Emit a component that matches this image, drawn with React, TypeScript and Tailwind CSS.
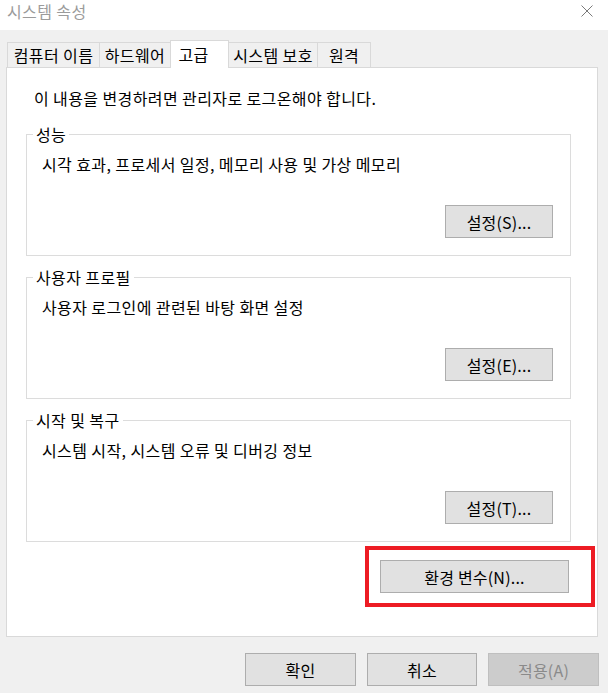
import React from "react";

type Tab = { label: string; width: string; active?: boolean };

const tabs: Tab[] = [
  { label: "컴퓨터 이름", width: "w-[93px]" },
  { label: "하드웨어", width: "w-[72px]" },
  { label: "고급", width: "w-[59px]", active: true },
  { label: "시스템 보호", width: "w-[90px]" },
  { label: "원격", width: "w-[54px]" },
];

const groups = [
  { title: "성능", desc: "시각 효과, 프로세서 일정, 메모리 사용 및 가상 메모리", button: "설정(S)..." },
  { title: "사용자 프로필", desc: "사용자 로그인에 관련된 바탕 화면 설정", button: "설정(E)..." },
  { title: "시작 및 복구", desc: "시스템 시작, 시스템 오류 및 디버깅 정보", button: "설정(T)..." },
];

function WinButton({
  children,
  className = "",
  disabled = false,
}: {
  children: React.ReactNode;
  className?: string;
  disabled?: boolean;
}) {
  return (
    <button
      type="button"
      disabled={disabled}
      className={
        "flex h-[33px] items-center justify-center border text-[16px] leading-[20px] tracking-[0.2px] " +
        (disabled
          ? "border-[#bfbfbf] bg-[#cccccc] text-[#8a8a8a]"
          : "border-[#adadad] bg-[#e1e1e1] text-black") +
        " " +
        className
      }
    >
      {children}
    </button>
  );
}

function GroupBox({ title, desc, button }: { title: string; desc: string; button: string }) {
  return (
    <div className="ml-[19px] mr-[26px] flex h-[122px] flex-col border border-[#dcdcdc]">
      <span className="-mt-[11px] ml-[6px] h-[20px] w-fit bg-white px-[3px] leading-[20px]">{title}</span>
      <p className="ml-[15px] mt-[10px] leading-[20px]">{desc}</p>
      <WinButton className="mb-[17px] mr-[17px] mt-auto w-[108px] self-end">{button}</WinButton>
    </div>
  );
}

export default function App() {
  return (
    <div className="flex h-[693px] w-[608px] flex-col bg-white font-['Noto_Sans_CJK_KR','Noto_Sans',sans-serif] text-[16px] tracking-[0.4px] text-black">
      {/* title bar */}
      <div className="flex h-[30px] flex-none items-center justify-between pl-[7px] pr-[15px]">
        <span className="-mt-[9px] leading-[20px] text-[#9b9b9b]">시스템 속성</span>
        <svg width="12" height="12" viewBox="0 0 12 12" className="-mt-[8px]">
          <path d="M0.5 0.5 L11.5 11.5 M11.5 0.5 L0.5 11.5" stroke="#7a7a7a" strokeWidth="1" fill="none" />
        </svg>
      </div>

      {/* body */}
      <div className="flex flex-1 flex-col bg-[#f0f0f0]">
        {/* tabs */}
        <div className="ml-[7px] mt-[10px] flex h-[27px] items-end">
          {tabs.map((t, i) => (
            <div
              key={t.label}
              className={
                t.width +
                (i > 0 ? " -ml-px" : "") +
                (t.active
                  ? " relative z-10 -mb-px flex h-[28px] items-center justify-center border border-b-0 border-[#d9d9d9] bg-white pb-[2px] pr-[12px]"
                  : " flex h-[25px] items-center justify-center border border-b-0 border-[#d9d9d9] bg-[#f0f0f0]")
              }
            >
              <span className="whitespace-nowrap leading-[20px]">{t.label}</span>
            </div>
          ))}
        </div>

        {/* tab panel */}
        <div className="ml-[6px] flex h-[570px] w-[592px] flex-col border border-[#d9d9d9] bg-white">
          <p className="ml-[27px] mt-[20px] leading-[20px]">이 내용을 변경하려면 관리자로 로그온해야 합니다.</p>
          <div className="mt-[26px] flex flex-col gap-[21px]">
            {groups.map((g) => (
              <GroupBox key={g.title} {...g} />
            ))}
          </div>
          <div className="mr-[2px] mt-[4px] flex h-[61px] w-[230px] self-end border-[4px] border-[#ed1c24] pl-[11px] pt-[10px]">
            <WinButton className="w-[189px]">환경 변수(N)...</WinButton>
          </div>
        </div>

        {/* dialog buttons */}
        <div className="mr-[9px] mt-[16px] flex justify-end gap-[11px]">
          <WinButton className="w-[111px]">확인</WinButton>
          <WinButton className="w-[110px]">취소</WinButton>
          <WinButton className="w-[111px]" disabled>
            적용(A)
          </WinButton>
        </div>
      </div>
    </div>
  );
}
